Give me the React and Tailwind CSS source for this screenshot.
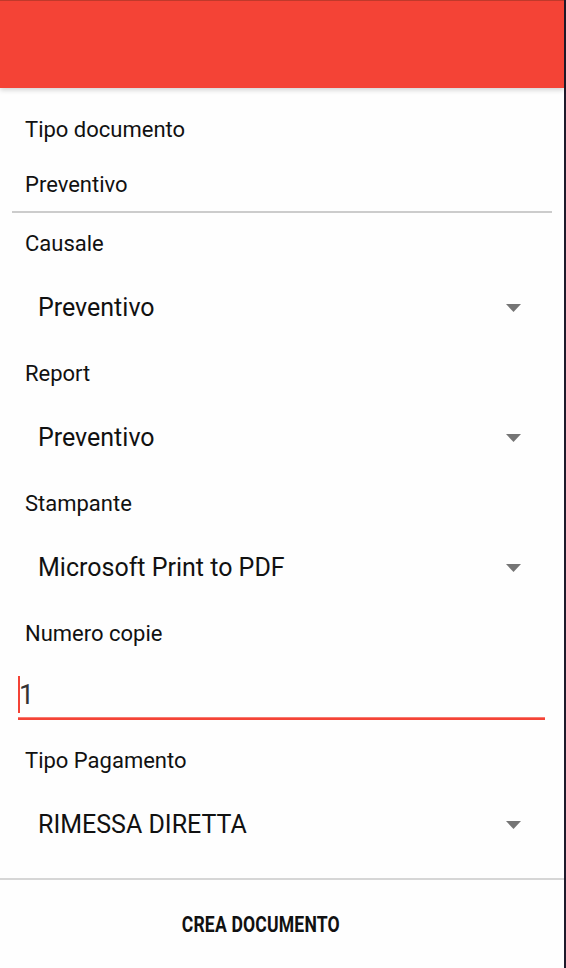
import React from "react";

function Arrow() {
  return (
    <svg width="15" height="8" viewBox="0 0 15 8" className="shrink-0">
      <path d="M0 0 L15 0 L7.5 8 Z" fill="#757575" />
    </svg>
  );
}

function Field({ label, value }) {
  return (
    <div className="flex flex-col">
      <div className="h-[60px] flex items-center pl-[25px] text-[22px] text-[#111111]">{label}</div>
      <div className="h-[70px] flex items-center pl-[38px] pr-[43px] justify-between">
        <span className="text-[25px] text-[#111111]">{value}</span>
        <Arrow />
      </div>
    </div>
  );
}

export default function App() {
  return (
    <div className="w-[566px] h-[968px] flex bg-white font-['Roboto','Noto_Sans',sans-serif] overflow-hidden">
      <div className="flex-1 flex flex-col bg-[#fefefe]">
        <div className="h-[88px] shrink-0 bg-[#f44336] border-t border-[#c0392b] shadow-[0_2px_5px_rgba(0,0,0,0.18)] relative z-10" />
        <div className="flex flex-col">
          <div className="mt-[30px] pl-[25px] text-[22px] text-[#111111] leading-[24px]">Tipo documento</div>
          <div className="mt-[31px] pl-[25px] text-[22px] text-[#111111] leading-[24px]">Preventivo</div>
          <div className="mt-[14px] mx-[12px] h-[2px] bg-[#cccccc]" />
          <Field label="Causale" value="Preventivo" />
          <Field label="Report" value="Preventivo" />
          <Field label="Stampante" value="Microsoft Print to PDF" />
          <div className="h-[60px] flex items-center pl-[25px] text-[22px] text-[#111111]">Numero copie</div>
          <div className="h-[67px] flex flex-col pl-[18px] pr-[19px]">
            <div className="mt-[13px] h-[37px] flex items-center relative">
              <div className="w-[2px] h-[37px] bg-[#f44336]" />
              <span className="text-[27px] leading-none text-[#333333] ml-[-1px] mt-[2px]">1</span>
            </div>
            <div className="mt-[4px] h-[3px] bg-[#f44336] border-t border-[#f87a70]" />
          </div>
          <Field label="Tipo Pagamento" value="RIMESSA DIRETTA" />
        </div>
        <div className="mt-[18px] h-[2px] bg-[#d6d6d6]" />
        <div className="flex-1 flex items-center justify-center pr-[42px]">
          <span className="inline-block scale-x-[0.8] text-[22px] font-bold text-[#111111] tracking-[0.2px]">CREA DOCUMENTO</span>
        </div>
      </div>
      <div className="w-[2px] bg-[#1e1a2b]" />
    </div>
  );
}
